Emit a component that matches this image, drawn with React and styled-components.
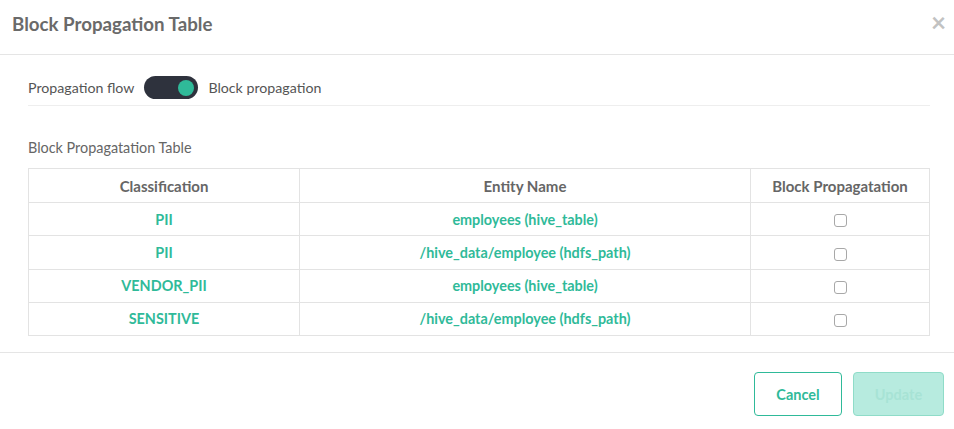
import React from "react";
import styled, { createGlobalStyle } from "styled-components";

const rows = [
  { cls: "PII", entity: "employees (hive_table)" },
  { cls: "PII", entity: "/hive_data/employee (hdfs_path)" },
  { cls: "VENDOR_PII", entity: "employees (hive_table)" },
  { cls: "SENSITIVE", entity: "/hive_data/employee (hdfs_path)" },
];

export default function App() {
  return (
    <>
      <GlobalStyle />
      <Modal>
        <Header>
          <Title>Block Propagation Table</Title>
          <Close>×</Close>
        </Header>
        <Body>
          <ToggleRow>
            <span>Propagation flow</span>
            <Toggle>
              <Knob />
            </Toggle>
            <span>Block propagation</span>
          </ToggleRow>
          <Label>Block Propagatation Table</Label>
          <Table>
            <thead>
              <tr>
                <Th $w={268}>Classification</Th>
                <Th $w={448}>Entity Name</Th>
                <Th>Block Propagatation</Th>
              </tr>
            </thead>
            <tbody>
              {rows.map((r, i) => (
                <tr key={i}>
                  <Td>{r.cls}</Td>
                  <Td>{r.entity}</Td>
                  <Td>
                    <Check />
                  </Td>
                </tr>
              ))}
            </tbody>
          </Table>
        </Body>
        <Footer>
          <Button>Cancel</Button>
          <Button $primary disabled>
            Update
          </Button>
        </Footer>
      </Modal>
    </>
  );
}

const GlobalStyle = createGlobalStyle`
  body {
    margin: 0;
    background: #fff;
    font-family: Lato, "Open Sans", sans-serif;
  }
`;

const Modal = styled.div`
  width: 954px;
  height: 429px;
  background: #fff;
  color: #666;
`;

const Header = styled.div`
  display: flex;
  align-items: center;
  justify-content: space-between;
  height: 55px;
  padding: 0 8px 6px 12px;
  border-bottom: 1px solid #e5e5e5;
  box-sizing: border-box;
`;

const Title = styled.h4`
  margin: 0;
  font-size: 18.7px;
  font-weight: 700;
  color: #6a6a6a;
`;

const Close = styled.span`
  font-size: 26px;
  font-weight: 700;
  color: #c2c2c2;
  line-height: 1;
  margin-top: -4px;
`;

const Body = styled.div`
  padding: 21px 24px 16px 28px;
`;

const ToggleRow = styled.div`
  display: flex;
  align-items: center;
  gap: 10px;
  font-size: 14.2px;
  color: #555;
  padding-bottom: 6px;
  border-bottom: 1px solid #eee;
`;

const Toggle = styled.div`
  display: flex;
  align-items: center;
  justify-content: flex-end;
  width: 54px;
  height: 23px;
  padding: 0 4px;
  box-sizing: border-box;
  border-radius: 12px;
  background: #2e323d;
`;

const Knob = styled.div`
  width: 16px;
  height: 16px;
  border-radius: 50%;
  background: #2fba99;
`;

const Label = styled.div`
  margin: 33px 0 12px;
  font-size: 14.4px;
  color: #666;
`;

const Table = styled.table`
  width: 902px;
  border-collapse: collapse;
  font-size: 14.4px;
`;

const Th = styled.th`
  width: ${(p) => (p.$w ? `${p.$w}px` : "auto")};
  height: 31px;
  padding: 1px;
  border: 1px solid #e3e3e3;
  color: #666;
  font-size: 15px;
  font-weight: 700;
  text-align: center;
`;

const Td = styled.td`
  height: 30.25px;
  padding: 1px;
  border: 1px solid #e3e3e3;
  color: #2fba99;
  font-weight: 700;
  text-align: center;
  vertical-align: middle;
`;

const Check = styled.span`
  display: inline-block;
  width: 11px;
  height: 11px;
  border: 1px solid #a8a8a8;
  border-radius: 3px;
  vertical-align: middle;
`;

const Footer = styled.div`
  display: flex;
  justify-content: flex-end;
  gap: 11px;
  padding: 19px 10px 0;
  border-top: 1px solid #e5e5e5;
`;

const Button = styled.button`
  width: ${(p) => (p.$primary ? "91px" : "88px")};
  height: 44px;
  border-radius: 4px;
  font-family: inherit;
  font-size: 14.5px;
  font-weight: 700;
  border: 1px solid ${(p) => (p.$primary ? "#8fdcc8" : "#2fba99")};
  background: ${(p) => (p.$primary ? "#b7ebdf" : "#fff")};
  color: ${(p) => (p.$primary ? "#a7e3d5" : "#2fba99")};
`;
